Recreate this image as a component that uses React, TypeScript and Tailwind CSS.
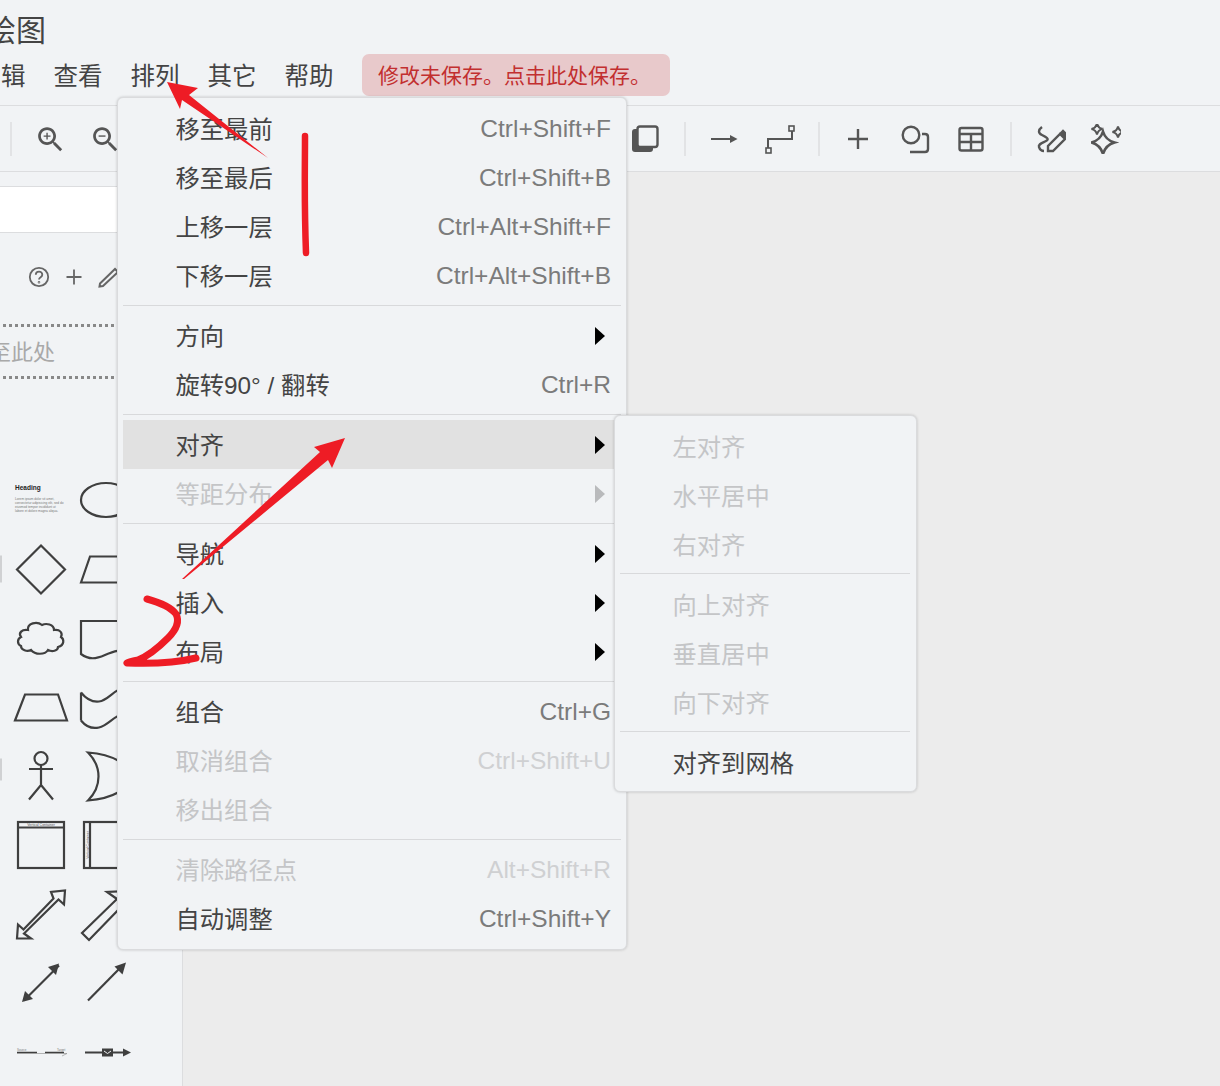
import type { ReactNode } from 'react';

const zoomBase =
  'M15.5 14h-.79l-.28-.27C15.41 12.59 16 11.11 16 9.5 16 5.91 13.09 3 9.5 3S3 5.91 3 9.5 5.91 16 9.5 16c1.61 0 3.09-.59 4.23-1.57l.27.28v.79l5 4.99L20.49 19l-4.99-5zm-6 0C7.01 14 5 11.99 5 9.5S7.01 5 9.5 5 14 7.01 14 9.5 11.99 14 9.5 14z';

type MenuRow =
  | { sep: true }
  | { label: string; keys?: string; off?: boolean; sub?: boolean; active?: boolean };

const mainMenu: MenuRow[] = [
  { label: '移至最前', keys: 'Ctrl+Shift+F' },
  { label: '移至最后', keys: 'Ctrl+Shift+B' },
  { label: '上移一层', keys: 'Ctrl+Alt+Shift+F' },
  { label: '下移一层', keys: 'Ctrl+Alt+Shift+B' },
  { sep: true },
  { label: '方向', sub: true },
  { label: '旋转90° / 翻转', keys: 'Ctrl+R' },
  { sep: true },
  { label: '对齐', sub: true, active: true },
  { label: '等距分布', sub: true, off: true },
  { sep: true },
  { label: '导航', sub: true },
  { label: '插入', sub: true },
  { label: '布局', sub: true },
  { sep: true },
  { label: '组合', keys: 'Ctrl+G' },
  { label: '取消组合', keys: 'Ctrl+Shift+U', off: true },
  { label: '移出组合', off: true },
  { sep: true },
  { label: '清除路径点', keys: 'Alt+Shift+R', off: true },
  { label: '自动调整', keys: 'Ctrl+Shift+Y' },
];

const alignMenu: MenuRow[] = [
  { label: '左对齐', off: true },
  { label: '水平居中', off: true },
  { label: '右对齐', off: true },
  { sep: true },
  { label: '向上对齐', off: true },
  { label: '垂直居中', off: true },
  { label: '向下对齐', off: true },
  { sep: true },
  { label: '对齐到网格' },
];

function Rows({ rows, sepClass }: { rows: MenuRow[]; sepClass: string }) {
  return (
    <>
      {rows.map((r, i) =>
        'sep' in r ? (
          <div key={i} className={`h-[1px] bg-[#d8d9db] ${sepClass}`} />
        ) : (
          <div
            key={i}
            className={`relative flex h-[49px] items-center justify-between pl-[52.500px] pr-[10px] text-[24.3px] ${
              r.active ? 'bg-[#e1e1e1]' : ''
            } ${r.off ? 'text-[#c4c5c7]' : 'text-[#444444]'}`}
          >
            <span className="pt-[3px]">{r.label}</span>
            {r.keys && (
              <span className={`pt-[1px] text-[24.5px] ${r.off ? 'text-[#cfd0d2]' : 'text-[#7b7b7b]'}`}>{r.keys}</span>
            )}
            {r.sub && (
              <svg viewBox="0 0 10 18" className={`mr-[6px] h-[18px] w-[10px] ${r.off ? 'fill-[#b9babc]' : 'fill-black'}`}>
                <path d="M0 0l10 9-10 9z" />
              </svg>
            )}
          </div>
        ),
      )}
    </>
  );
}

function ToolIcon({ className, box, children }: { className: string; box: string; children: ReactNode }) {
  return (
    <svg
      viewBox={box}
      className={`h-[30px] w-[30px] shrink-0 fill-none stroke-[#555555] [stroke-width:2.4] ${className}`}
    >
      {children}
    </svg>
  );
}

function Divider({ className }: { className: string }) {
  return <div className={`h-[34px] w-[2px] shrink-0 bg-[#e2e3e5] ${className}`} />;
}

function Toolbar() {
  return (
    <div className="flex h-[66px] items-center border-b border-[#dcdddf] pt-[1px]">
      <Divider className="ml-[10px]" />
      <svg viewBox="0 0 24 24" className="ml-[22px] h-[33px] w-[33px] shrink-0 fill-[#555555]">
        <path d={zoomBase} />
        <path d="M12 10h-2v2H9v-2H7V9h2V7h1v2h2v1z" />
      </svg>
      <svg viewBox="0 0 24 24" className="ml-[22px] h-[33px] w-[33px] shrink-0 fill-[#555555]">
        <path d={zoomBase} />
        <path d="M7 9h5v1H7z" />
      </svg>
      <ToolIcon className="ml-[508px]" box="630 124 30 30">
        <rect x="632" y="129" width="21" height="23" rx="3" className="fill-[#555555] stroke-none" />
        <rect x="637.5" y="126.5" width="20" height="20.5" rx="2.5" className="fill-[#f1f3f5]" />
      </ToolIcon>
      <Divider className="ml-[24px]" />
      <ToolIcon className="ml-[22px]" box="708 124 30 30">
        <path d="M711 139h21" className="[stroke-width:2]" />
        <path d="M730 135l7.5 4-7.5 4z" className="fill-[#555555] stroke-none" />
      </ToolIcon>
      <ToolIcon className="ml-[27px]" box="765 124 30 30">
        <path d="M768 148v-9h24v-8" className="[stroke-width:2]" />
        <rect x="766" y="148" width="5" height="5" className="[stroke-width:1.6]" />
        <rect x="789" y="126" width="5" height="5" className="[stroke-width:1.6]" />
      </ToolIcon>
      <Divider className="ml-[23px]" />
      <ToolIcon className="ml-[23px]" box="844 124 30 30">
        <path d="M859 129v20M849 139h20" />
      </ToolIcon>
      <ToolIcon className="ml-[27px]" box="900 124 30 30">
        <circle cx="911" cy="135" r="8.3" />
        <path d="M922 134h3q3 0 3 3v12q0 3-3 3h-15" />
      </ToolIcon>
      <ToolIcon className="ml-[26px]" box="956 124 30 30">
        <rect x="959.5" y="128" width="23" height="22.5" rx="2" />
        <path d="M959.5 134h23M959.5 142h23M971 134v16.5" />
      </ToolIcon>
      <Divider className="ml-[24px]" />
      <ToolIcon className="ml-[24px]" box="1035 124 30 30">
        <path d="M1041 127c-4 3-4 6 0 8s8 4 4 6-8 3-7 6 3 4 5 4" className="[stroke-width:2.4]" />
        <path d="M1047 151v-5l12-12 5 5-12 12z" className="[stroke-width:2.4]" />
        <path d="M1060 133l2-2 4 4-2 2z" className="fill-[#555555]" />
      </ToolIcon>
      <ToolIcon className="ml-[25px]" box="1090 124 30 30">
        <path d="M1102 131.500Q1104.500 140 1113.500 142.500 1104.500 145 1102 154 1099.500 145 1090.500 142.500 1099.500 140 1102 131.500z" className="[stroke-width:2.600]" />
        <path d="M1096 123.500Q1097 128 1101.500 129 1097 130 1096 134.500 1095 130 1090.500 129 1095 128 1096 123.500z" className="[stroke-width:2]" />
        <path d="M1117 126.500Q1118 131 1122.500 132 1118 133 1117 137.500 1116 133 1111.500 132 1116 131 1117 126.500z" className="[stroke-width:2]" />
      </ToolIcon>
    </div>
  );
}

function Cell({ children }: { children?: ReactNode }) {
  return (
    <svg viewBox="0 0 65 69" className="h-[69px] w-[65px] fill-none stroke-[#3f3f3f] [stroke-width:2.2]">
      {children}
    </svg>
  );
}

function ShapeGrid() {
  return (
    <div className="ml-[-56px] mt-[87px] grid w-[260px] grid-cols-[65px_65px_65px] auto-rows-[69px]">
      <Cell />
      <div className="flex h-[69px] w-[65px] flex-col pl-[6px] pt-[18px] text-[#222222]">
        <div className="text-[6.5px] font-bold leading-[8px]">Heading</div>
        <div className="mt-[5px] w-[50px] text-[3.2px] leading-[4px] text-[#777777]">
          Lorem ipsum dolor sit amet, consectetur adipisicing elit, sed do eiusmod tempor incididunt ut labore et dolore magna aliqua.
        </div>
      </div>
      <Cell>
        <ellipse cx="32" cy="34" rx="25" ry="17" />
      </Cell>

      <Cell>
        <rect x="55" y="20.500" width="3" height="27" className="fill-[#d0d1d3] stroke-none" />
      </Cell>
      <Cell>
        <path d="M32 10.500L56 34.500 32 58.500 8 34.500z" />
      </Cell>
      <Cell>
        <path d="M7 47.500L16 21.500H56L47 47.500z" />
      </Cell>

      <Cell />
      <Cell>
        <path d="M19 26c-1-7 9-9 14-5 4-2 12-1 12 5 6-1 9 3 7 7 3 2 4 8-3 10 0 4-6 5-10 3-3 5-13 5-17 0-4 2-10 0-10-4-4-2-4-7 0-9-3-4 1-8 7-7z" />
      </Cell>
      <Cell>
        <path d="M7 17v33c8 6 15 5 24 1s16-6 25-3V17z" />
      </Cell>

      <Cell />
      <Cell>
        <path d="M6 47.500L16 21.500H49L58 47.500z" />
      </Cell>
      <Cell>
        <path d="M7 19.500c4 5 9 10 18 9s15-12 25-14M7 47.500v-28M7 47.500c4 5 9 9 18 7s15-12 25-14" />
      </Cell>

      <Cell>
        <rect x="55" y="16.500" width="3" height="22" className="fill-[#d0d1d3] stroke-none" />
      </Cell>
      <Cell>
        <circle cx="32" cy="16.500" r="6.500" />
        <path d="M20 27h24M32 23v20M20 57.500L32 43l12 14.500" />
      </Cell>
      <Cell>
        <path d="M14 10.500c25 2 42 12 43 24-1 12-18 22-43 24 14-14 14-34 0-48z" />
      </Cell>

      <Cell />
      <Cell>
        <rect x="9" y="11" width="46" height="46" />
        <path d="M9 16.500h46" />
        <text x="32" y="15" textAnchor="middle" className="fill-[#555555] stroke-none text-[3.500px]">Vertical Container</text>
      </Cell>
      <Cell>
        <rect x="10" y="11" width="46" height="46" />
        <path d="M16 11v46" />
        <text x="14.500" y="34" textAnchor="middle" transform="rotate(-90 14.500 34)" className="fill-[#555555] stroke-none text-[3.500px]">Vertical Container</text>
      </Cell>

      <Cell />
      <Cell>
        <path d="M56 10.500L55 24.500 49.500 19.500 15 53.500 22 58.500 8 58.500 9 44.500 14.500 49.500 44.500 18.500 42 12z" />
      </Cell>
      <Cell>
        <path d="M8 53L43 19l-10-7 23-1-1 23-6-9-34 35z" />
      </Cell>

      <Cell />
      <Cell>
        <path d="M15 51.500L50 16.500" />
        <path d="M50 14.500l-3 11.500-8-8zM13 53l3-11 8 8z" className="fill-[#3f3f3f] stroke-none" />
      </Cell>
      <Cell>
        <path d="M14 51.500L48 17" />
        <path d="M52 13.500l-3.500 12-8-8z" className="fill-[#3f3f3f] stroke-none" />
      </Cell>

      <Cell />
      <Cell>
        <path d="M8 34.500h20M36 34.500h19" className="[stroke-width:1.500]" />
        <path d="M8 35.500h50l-5 2.500" className="stroke-[#888888] [stroke-width:.6]" />
        <text x="8" y="33" className="fill-[#777777] stroke-none text-[3px]">Source</text>
        <text x="48" y="33" className="fill-[#777777] stroke-none text-[3px]">Target</text>
      </Cell>
      <Cell>
        <path d="M11 34.500h39" />
        <path d="M57 34.500l-8-4v8z" className="fill-[#3f3f3f] stroke-none" />
        <rect x="28" y="30.500" width="11" height="8" className="fill-[#3f3f3f] stroke-none" />
        <path d="M30 33l3.500 2.500 3.500-2.500" className="stroke-[#f1f3f5] [stroke-width:1]" />
      </Cell>
    </div>
  );
}

function Sidebar() {
  return (
    <aside className="h-full w-[183px] shrink-0 overflow-hidden border-r border-[#dcdddf] pt-[14px]">
      <div className="h-[47px] border-y border-[#dcdddf] bg-white" />
      <div className="mt-[22px] flex h-[44px] items-center pl-[28px] text-[#666666]">
        <svg viewBox="0 0 22 22" className="h-[22px] w-[22px] fill-none stroke-[#666666] [stroke-width:1.800]">
          <circle cx="11" cy="11" r="9.200" />
          <path d="M7.800 8.800c0-4.300 6.500-4.300 6.500 0 0 2.400-3.300 2.400-3.300 4.700" />
          <circle cx="11" cy="16.300" r=".4" />
        </svg>
        <svg viewBox="0 0 16 16" className="ml-[16px] h-4 w-4 fill-none stroke-[#666666] [stroke-width:1.800]">
          <path d="M8 .5v15M.5 8h15" />
        </svg>
        <svg viewBox="0 0 22 22" className="ml-[16px] h-[22px] w-[22px] fill-none stroke-[#666666] [stroke-width:2]">
          <path d="M2 17.500l-.500 3 3.500-.500L20 6l-3-3z" />
        </svg>
      </div>
      <div className="ml-[-20px] mt-[25px] flex h-[55px] w-[260px] items-center border-y-[3px] border-dotted border-[#888888] pt-[2px] text-[22px] text-[#a9a9a9]">
        <span className="ml-[-13px] whitespace-nowrap">动至此处</span>
      </div>
      <ShapeGrid />
    </aside>
  );
}

function Annotations() {
  return (
    <svg viewBox="0 0 1220 1086" className="absolute inset-0 h-[1086px] w-[1220px] fill-none stroke-none">
      <path d="M167 82L198 88 189 95 268 158 182 100 180 109z" className="fill-[#ee1c25]" />
      <path d="M345 438L314 447 320 452 182 579 184 579 328 460 332 468z" className="fill-[#ee1c25]" />
      <path d="M305 136C305 170 304 200 306 253" strokeLinecap="round" className="stroke-[#ee1c25] [stroke-width:6.500]" />
      <path
        d="M147 599C158 602 170 606 176 614C180 622 176 630 168 638C158 648 148 656 138 660C132 661 128 662 127 663C150 664 175 663 196 658"
        strokeLinecap="round"
        strokeLinejoin="round"
        className="stroke-[#ee1c25] [stroke-width:7]"
      />
    </svg>
  );
}

export default function App() {
  return (
    <div className="relative h-[1086px] w-[1220px] overflow-hidden bg-[#f1f3f5] font-['Liberation_Sans','Noto_Sans_CJK_SC',sans-serif]">
      <div className="flex h-full flex-col">
        <header className="h-[106px] shrink-0 border-b border-[#dcdddf] text-[#444444]">
          <div className="ml-[-14px] flex h-[54px] items-end text-[30px] leading-[46px]">绘图</div>
          <div className="ml-[-23.5px] flex h-[42px] items-center gap-[28px] whitespace-nowrap text-[24.5px]">
            <span className="pt-[4px]">编辑</span>
            <span className="pt-[4px]">查看</span>
            <span className="pt-[4px]">排列</span>
            <span className="pt-[4px]">其它</span>
            <span className="pt-[4px]">帮助</span>
            <span className="ml-[.5px] flex h-[42px] w-[308px] items-center rounded-[7px] bg-[#e8c9cb] pl-[16px] pt-[2px] text-[21px] text-[#c22f2f]">
              修改未保存。点击此处保存。
            </span>
          </div>
        </header>
        <Toolbar />
        <div className="flex min-h-0 flex-1">
          <Sidebar />
          <main className="flex-1 bg-[#ececec]" />
        </div>
      </div>

      <div className="absolute left-[117px] top-[97px] w-[510px] rounded-[6px] border border-[#dadbdd] bg-[#f1f3f5] px-[5px] py-[6px] shadow-[0_0_3px_rgba(0,0,0,0.2)]">
        <Rows rows={mainMenu} sepClass="my-[5px]" />
      </div>
      <div className="absolute left-[614px] top-[415px] w-[303px] rounded-[6px] border border-[#dadbdd] bg-[#f1f3f5] pb-[4px] pl-[5px] pr-[6px] pt-[6px] shadow-[0_0_3px_rgba(0,0,0,0.2)]">
        <Rows rows={alignMenu} sepClass="mb-[6px] mt-[4px]" />
      </div>
      <Annotations />
    </div>
  );
}
